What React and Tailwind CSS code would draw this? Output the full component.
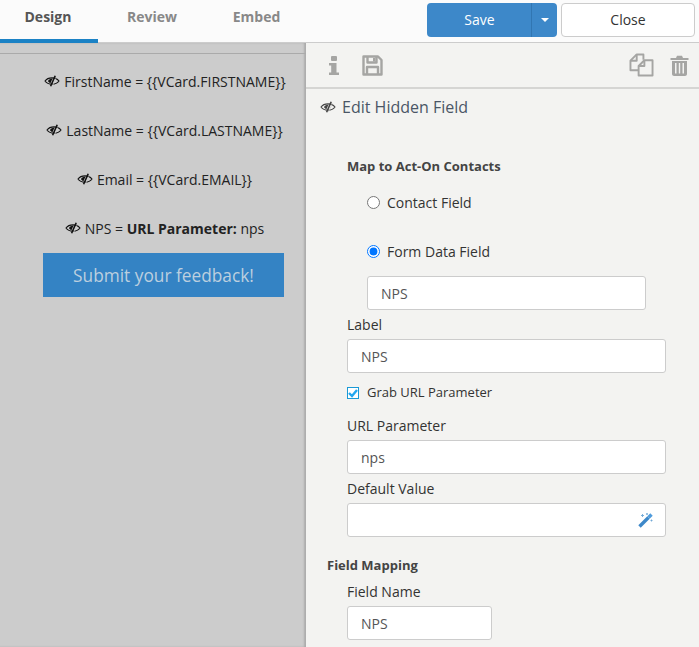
function EyeOff({ className = "" }) {
  return (
    <svg width="16" height="12" viewBox="0 0 16 12" className={`shrink-0 ${className}`} fill="none" stroke="currentColor">
      <path d="M1 6C4 1.8 12 1.8 15 6C12 10.2 4 10.2 1 6Z" strokeWidth="1.1" />
      <path d="M4 6C4.6 4.6 6.5 3.6 8.6 3.6L6.4 8.2C5.2 7.8 4.4 7 4 6Z" fill="currentColor" stroke="none" />
      <path d="M11.2 0.8L6.6 11.2" strokeWidth="1.6" />
      <path d="M12.4 2.5L8.4 11" stroke="#ccc" strokeWidth="0.7" />
    </svg>
  );
}

function InfoIcon() {
  return (
    <svg width="10" height="19" viewBox="0 0 10 19" fill="#a5a5a3">
      <rect x="2" y="0" width="6" height="5" rx="1" />
      <path d="M0 7H7.5V16.5H10V19H0V16.5H2.2V9.5H0Z" />
    </svg>
  );
}

function SaveIcon() {
  return (
    <svg width="21" height="21" viewBox="0 0 21 21" fill="none" stroke="#a5a5a3" strokeWidth="2.4" strokeLinejoin="round">
      <path d="M1.5 1.5H16L19.5 5V19.5H1.5Z" />
      <path d="M5.5 2V7.5H14.5V2" />
      <path d="M5 19V12H16V19" />
      <rect x="11" y="3" width="2.4" height="3.5" fill="#a5a5a3" stroke="none" />
    </svg>
  );
}

function CopyIcon() {
  return (
    <svg width="25" height="24" viewBox="0 0 26 25" fill="none" stroke="#a5a5a3" strokeWidth="2" strokeLinejoin="round">
      <path d="M15 7V1.5H8L1.5 8v10H10" />
      <path d="M8 1.5V8H1.5" />
      <path d="M24.5 7.5V23.5H10V13.5L16 7.5Z" fill="#f3f3f1" />
      <path d="M16 7.5V13.5H10" />
    </svg>
  );
}

function TrashIcon() {
  return (
    <svg width="19" height="21" viewBox="0 0 19 21" fill="#a5a5a3">
      <path d="M6 3L7 .8H12L13 3H18.5V5H.5V3Z" />
      <path fillRule="evenodd" d="M2 6H17V19C17 20 16 21 15 21H4C3 21 2 20 2 19ZM5 8V18.5H6.5V8ZM8.8 8V18.5H10.2V8ZM12.5 8V18.5H14V8Z" />
    </svg>
  );
}

function WandIcon() {
  return (
    <svg width="16" height="16" viewBox="0 0 16 16" fill="none">
      <path d="M1.5 14.5L10.5 5.5" stroke="#3d88c9" strokeWidth="3.4" />
      <path d="M10.5 5.5L13.5 2.5" stroke="#4f9bdc" strokeWidth="3.4" />
      <path d="M3 3.5H6M4.5 2V5M9 1V3M8 2H10M13.5 7.5V9.5M12.5 8.5H14.5" stroke="#6fa8d6" strokeWidth="0.9" />
    </svg>
  );
}

function Preview({ children, pad }) {
  return (
    <div className={`flex items-center justify-center h-[24px] whitespace-nowrap text-[14px] text-[#222] ${pad}`}>
      <EyeOff className="mr-[4px] text-[#111]" />
      <span>{children}</span>
    </div>
  );
}

function Field({ label, value, className = "w-full" }) {
  return (
    <div>
      <div className="text-[14px] leading-[20px] text-[#333]">{label}</div>
      <div className={`${className} mt-[4px] h-[34px] flex items-center px-[13px] bg-white border border-[#ccc] rounded-[3px] text-[14px] text-[#555]`}>
        {value}
      </div>
    </div>
  );
}

export default function App() {
  return (
    <div className="w-[699px] h-[647px] overflow-hidden bg-white font-['Open_Sans',sans-serif]">
      {/* top bar */}
      <div className="flex h-[43px] bg-[#fbfbfb] border-b border-[#ccc]">
        <div className="flex items-start">
          <div className="w-[98px] h-[43px] border-b-[4px] border-[#1b82c5] pt-[6px] pr-[2px] text-center text-[14px] font-bold text-[#555]">Design</div>
          <div className="w-[108px] pt-[6px] text-center text-[14px] font-bold text-[#888]">Review</div>
          <div className="w-[101px] pt-[6px] text-center text-[14px] font-bold text-[#888]">Embed</div>
        </div>
        <div className="flex ml-auto mt-[3px] mr-[4px] gap-[4px] h-[34px]">
          <div className="flex w-[130px] rounded-[4px] bg-[#3d88c9] text-white text-[14px]">
            <div className="flex-1 flex items-center justify-center pl-[1px] pb-[1px] border-r border-[#3176b2]">Save</div>
            <div className="w-[25px] flex items-center justify-center">
              <span className="border-x-[4px] border-x-transparent border-t-[4px] border-t-white"></span>
            </div>
          </div>
          <div className="w-[134px] flex items-center justify-center pb-[1px] rounded-[4px] bg-white border border-[#ccc] text-[14px] text-[#333]">Close</div>
        </div>
      </div>

      <div className="flex h-[604px]">
        {/* form preview */}
        <div className="w-[306px] shrink-0 bg-[#ccc] shadow-[inset_-2px_0_2px_rgba(0,0,0,0.16)]">
          <div className="h-[11px] border-b border-[#aaa]"></div>
          <div className="flex flex-col pt-[15px] pl-[43px] pr-[20px]">
            <Preview pad="mb-[25px] pl-[1px]">FirstName = {"{{VCard.FIRSTNAME}}"}</Preview>
            <Preview pad="mb-[25px]">LastName = {"{{VCard.LASTNAME}}"}</Preview>
            <Preview pad="mb-[25px]">Email = {"{{VCard.EMAIL}}"}</Preview>
            <Preview pad="mb-[13px]">NPS = <b className="font-bold">URL Parameter:</b> nps</Preview>
            <div className="w-[241px] h-[44px] flex items-center justify-center pt-[2px] bg-[#3483c4] text-[17.3px] text-[#bccfdf]">Submit your feedback!</div>
          </div>
        </div>

        {/* edit panel */}
        <div className="flex-1 bg-[#f3f3f1]">
          <div className="h-[46px] flex items-center pl-[23px] pr-[10px] border-b-2 border-[#d5d5d3]">
            <InfoIcon />
            <div className="ml-[23px]"><SaveIcon /></div>
            <div className="ml-auto flex items-center gap-[16px]">
              <CopyIcon />
              <TrashIcon />
            </div>
          </div>

          <div className="flex items-center h-[35px] pl-[14px] text-[16px] text-[#4a5666]">
            <EyeOff className="mr-[6px] text-[#444]" />
            Edit Hidden Field
          </div>

          <div className="pl-[41px] pr-[33px] pt-[32px]">
            <div className="text-[13px] font-bold leading-[20px] text-[#444]">Map to Act-On Contacts</div>
            <div className="pl-[20px] pt-[16px]">
              <label className="flex items-center gap-[7px] h-[20px] text-[14px] text-[#333]">
                <input type="radio" name="map" readOnly className="w-[13px] h-[13px] accent-[#0075ff]" />
                Contact Field
              </label>
              <label className="flex items-center gap-[7px] h-[20px] mt-[29px] text-[14px] text-[#333]">
                <input type="radio" name="map" defaultChecked className="w-[13px] h-[13px] accent-[#0075ff]" />
                Form Data Field
              </label>
              <div className="mt-[15px] w-[279px] h-[34px] flex items-center px-[13px] bg-white border border-[#ccc] rounded-[3px] text-[14px] text-[#555]">NPS</div>
            </div>
            <div className="mt-[5px]">
              <Field label="Label" value="NPS" />
            </div>
            <div className="flex items-center gap-[8px] h-[20px] mt-[10px] text-[13px] text-[#333]">
              <span className="w-[12px] h-[12px] flex items-center justify-center bg-white border border-[#1a9ad6]">
                <svg width="10" height="10" viewBox="0 0 10 10" fill="none" stroke="#22a7f0" strokeWidth="2.4">
                  <path d="M1 5L4 8L9 2" />
                </svg>
              </span>
              Grab URL Parameter
            </div>
            <div className="mt-[13px]">
              <Field label="URL Parameter" value="nps" />
            </div>
            <div className="mt-[5px]">
              <div className="text-[14px] leading-[20px] text-[#333]">Default Value</div>
              <div className="mt-[4px] h-[34px] flex items-center justify-end pr-[11px] bg-white border border-[#ccc] rounded-[3px]">
                <WandIcon />
              </div>
            </div>
          </div>

          <div className="pl-[21px] pt-[18px] text-[13px] font-bold leading-[20px] text-[#444]">Field Mapping</div>
          <div className="pl-[41px] pt-[7px]">
            <Field label="Field Name" value="NPS" className="w-[145px]" />
          </div>
        </div>
      </div>
    </div>
  );
}
